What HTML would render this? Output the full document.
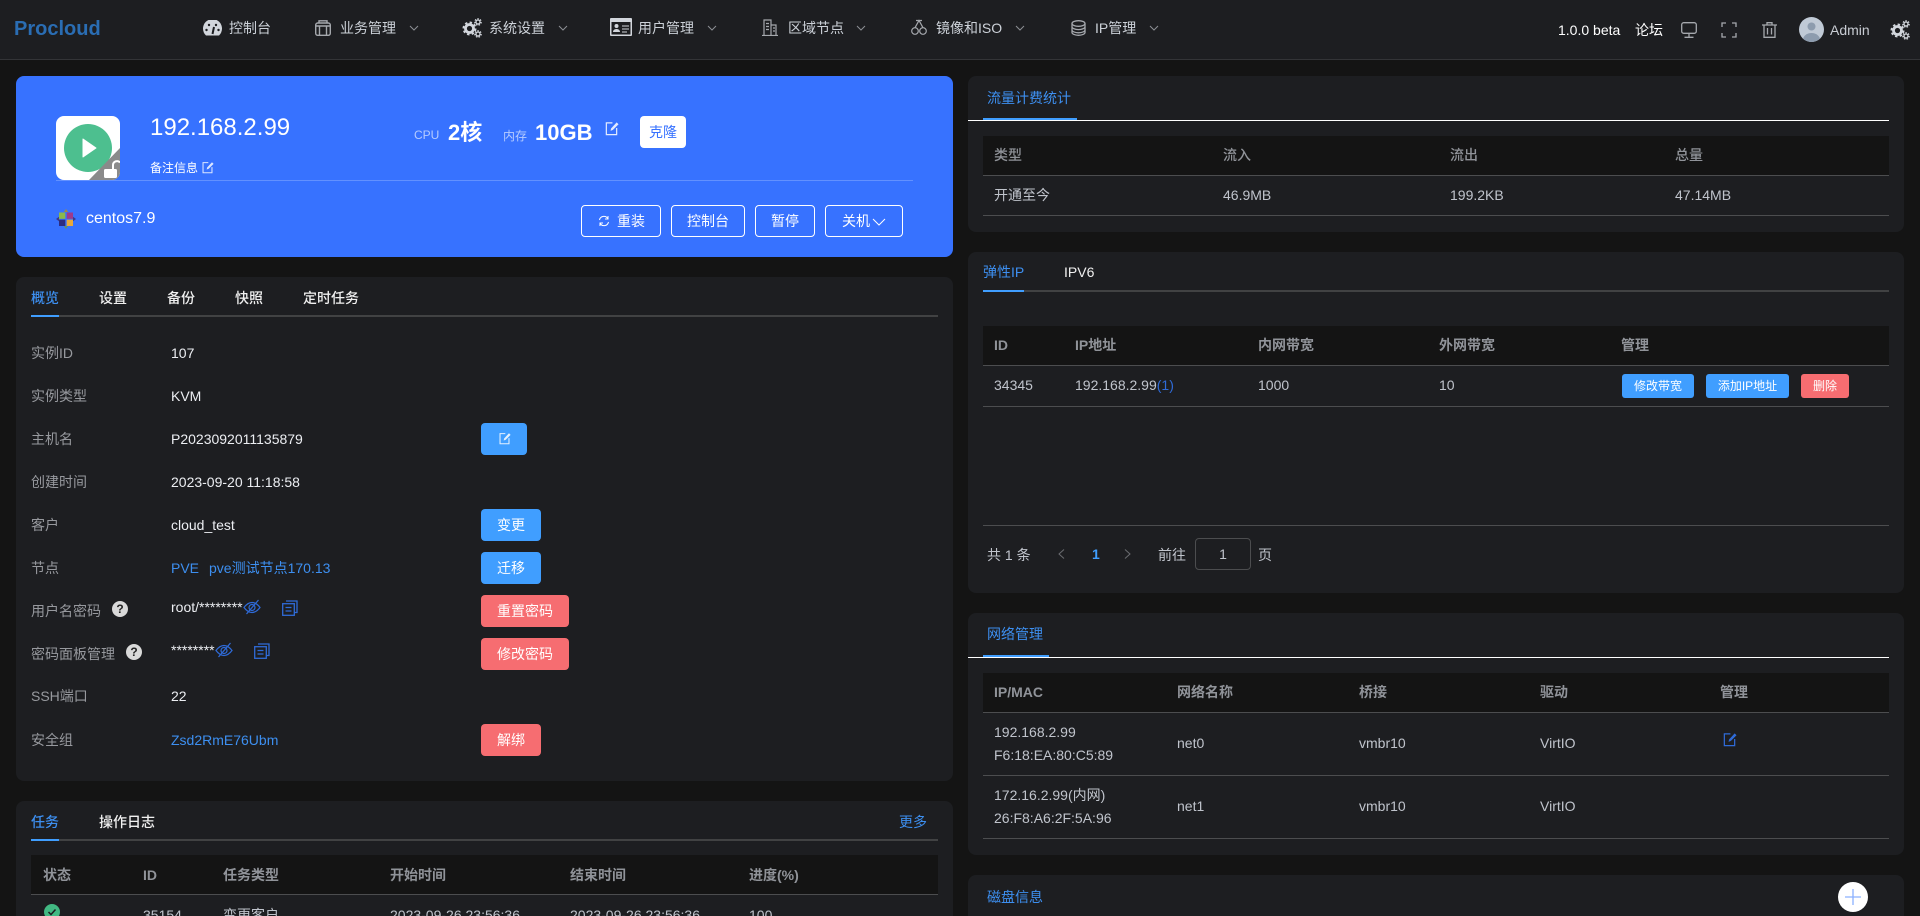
<!DOCTYPE html>
<html lang="zh"><head><meta charset="utf-8"><title>Procloud</title>
<style>
*{box-sizing:border-box}
html,body{margin:0;padding:0;width:1920px;height:916px;overflow:hidden;background:#141414}
body{font:14px/20px "Liberation Sans","Noto Sans CJK SC",sans-serif;color:#c0c4cc}
#r{position:relative;width:1920px;height:916px;overflow:hidden;background:#141414}
.a,.t,.card,.b,svg.i{position:absolute}
.t{white-space:nowrap;line-height:20px}
.card{background:#1d1e21;border-radius:8px}
.b{border-radius:4px;color:#fff;text-align:center;white-space:nowrap}
.blue{background:#409eff}.red{background:#f66d71}
.lb{color:#97999e}.v{color:#eceef2}.lk{color:#3d8ff0}
.n{color:#ccd1d8}
.act{color:#3d8ff0}.tab{color:#f0f0f0;font-weight:500}
.th{color:#909399;font-weight:700}
.head{position:absolute;background:#141414;height:39px}
.ln{position:absolute;height:1px;background:#4c4d4f}
.ul{position:absolute;height:2px;background:#409eff}
.ol{position:absolute;height:2px;background:#414243}
.wl{position:absolute;height:1px;background:#fff}
.hb{border:1px solid #fff;background:transparent;line-height:30px;height:32px;top:205px}
</style></head><body><div id="r">
<svg width="0" height="0" style="position:absolute">
<symbol id="edit" viewBox="0 0 16 16"><path d="M9 2H2.500v12.500h11V7.500" fill="none" stroke="currentColor" stroke-width="1.300"/><path d="M7 10.500l.5-2.500L13.500 1.500l2 2-6 6z" fill="currentColor"/></symbol>
<symbol id="chev" viewBox="0 0 10 6"><path d="M1 1l4 4 4-4" fill="none" stroke="#8c8f94" stroke-width="1"/></symbol>
<symbol id="gear" viewBox="0 0 20 20"><g fill="none" stroke="#d2d6dc"><circle cx="7.500" cy="10.500" r="4" stroke-width="2.800"/><circle cx="7.500" cy="10.500" r="6" stroke-width="2" stroke-dasharray="2.400 2.300"/><circle cx="16" cy="4" r="2" stroke-width="1.300"/><circle cx="16" cy="4" r="3.200" stroke-width="1.200" stroke-dasharray="1.500 1.300"/><circle cx="16" cy="16" r="2" stroke-width="1.300"/><circle cx="16" cy="16" r="3.200" stroke-width="1.200" stroke-dasharray="1.500 1.300"/></g></symbol>
<symbol id="eye" viewBox="0 0 18 16"><g fill="none" stroke="#2f6bd8" stroke-width="1.200"><path d="M1 8.500C4 4.500 6.500 3.500 9 3.500s5 1 8 5c-3 4-5.500 5-8 5s-5-1-8-5z"/><circle cx="9" cy="8.500" r="3"/><path d="M3.500 15L15.500 1"/></g></symbol>
<symbol id="copy" viewBox="0 0 16 16"><g fill="none" stroke="#2f6bd8" stroke-width="1.300"><rect x=".7" y="3.700" width="11.600" height="11.600"/><path d="M4 1h11v11.500h-2.500M3.500 7.500h6M3.500 11h6"/></g></symbol>
</svg>

<!-- header -->
<div class="a" style="left:0;top:0;width:1920px;height:60px;background:#1d1e21;border-bottom:1px solid #333437"></div>
<div class="t" style="left:14px;top:18px;font-size:20px;line-height:22px;font-weight:700;color:#2a6db3">Procloud</div>

<svg class="i" style="left:203px;top:20px" width="19" height="16" viewBox="0 0 19 16"><path d="M3 15.500A9.500 9.500 0 1 1 16 15.500z" fill="#d2d6dc"/><path d="M9.500 14l1.500-7" stroke="#1d1e21" stroke-width="2"/><circle cx="3.500" cy="10" r="1.200" fill="#1d1e21"/><circle cx="15.500" cy="10" r="1.200" fill="#1d1e21"/><circle cx="6" cy="5" r="1.200" fill="#1d1e21"/><circle cx="13" cy="5" r="1.200" fill="#1d1e21"/></svg>
<div class="t n" style="left:229px;top:18px">控制台</div>
<svg class="i" style="left:315px;top:20px" width="16" height="16" viewBox="0 0 16 16"><g fill="none" stroke="#a5a8ad" stroke-width="1.400"><rect x=".7" y="3" width="14.600" height="12.300" rx="2"/><path d="M1 6h14M4.500 6v9.300M11.500 6v9.300M4 3V.8h8V3"/></g></svg>
<div class="t n" style="left:340px;top:18px">业务管理</div>
<svg class="i" style="left:409px;top:25px" width="10" height="6"><use href="#chev"/></svg>
<svg class="i" style="left:462px;top:18px" width="20" height="20"><use href="#gear"/></svg>
<div class="t n" style="left:489px;top:18px">系统设置</div>
<svg class="i" style="left:558px;top:25px" width="10" height="6"><use href="#chev"/></svg>
<svg class="i" style="left:610px;top:18px" width="22" height="18" viewBox="0 0 22 18"><rect x="0" y="0" width="22" height="18" rx="1" fill="#d2d6dc"/><rect x="1.500" y="4" width="19" height="12.500" fill="#1d1e21"/><circle cx="6.500" cy="8" r="2" fill="#d2d6dc"/><path d="M3 14c0-4 7-4 7 0z" fill="#d2d6dc"/><path d="M12 8h7M12 11h7M12 14h5" stroke="#d2d6dc"/></svg>
<div class="t n" style="left:638px;top:18px">用户管理</div>
<svg class="i" style="left:707px;top:25px" width="10" height="6"><use href="#chev"/></svg>
<svg class="i" style="left:762px;top:19px" width="16" height="17" viewBox="0 0 16 17"><g fill="none" stroke="#a5a8ad" stroke-width="1.200"><path d="M0 16.500h16M2 16V1h7v15M9 6h5v10M4 4.500h3M4 7.500h3M4 10.500h3M11 9h2M11 12h2"/></g></svg>
<div class="t n" style="left:788px;top:18px">区域节点</div>
<svg class="i" style="left:856px;top:25px" width="10" height="6"><use href="#chev"/></svg>
<svg class="i" style="left:911px;top:19px" width="16" height="16" viewBox="0 0 16 16"><g fill="none" stroke="#a5a8ad" stroke-width="1.200"><circle cx="4" cy="12" r="3.300"/><circle cx="12" cy="12" r="3.300"/><path d="M4 8.700L8 1.500l4 7.200M5 1.500h6"/></g></svg>
<div class="t n" style="left:936px;top:18px">镜像和ISO</div>
<svg class="i" style="left:1015px;top:25px" width="10" height="6"><use href="#chev"/></svg>
<svg class="i" style="left:1071px;top:20px" width="15" height="16" viewBox="0 0 15 16"><g fill="none" stroke="#a5a8ad" stroke-width="1.300"><ellipse cx="7.500" cy="3.500" rx="6.500" ry="2.800"/><path d="M1 3.500v9c0 1.500 3 2.800 6.500 2.800S14 14 14 12.500v-9M1 6.800c0 1.500 3 2.800 6.500 2.800S14 8.300 14 6.800M1 10c0 1.500 3 2.800 6.500 2.800S14 11.500 14 10"/></g></svg>
<div class="t n" style="left:1095px;top:18px">IP管理</div>
<svg class="i" style="left:1149px;top:25px" width="10" height="6"><use href="#chev"/></svg>

<div class="t" style="left:1558px;top:20px;color:#fff">1.0.0 beta</div>
<div class="t" style="left:1635px;top:20px;color:#fff">论坛</div>
<svg class="i" style="left:1681px;top:22px" width="16" height="16" viewBox="0 0 16 16"><g fill="none" stroke="#a5a8ad" stroke-width="1.300"><rect x=".7" y=".7" width="14.600" height="10.600" rx="2"/><path d="M8 11.500V15M3.500 15.300h9"/></g></svg>
<svg class="i" style="left:1721px;top:22px" width="16" height="16" viewBox="0 0 16 16"><path d="M1 5V1h4M11 1h4v4M15 11v4h-4M5 15H1v-4" fill="none" stroke="#a5a8ad" stroke-width="1.300"/></svg>
<svg class="i" style="left:1762px;top:22px" width="15" height="16" viewBox="0 0 15 16"><path d="M0 3h15M5 3V.7h5V3M2 3v12.300h11V3M5.500 6v6.500M9.500 6v6.500" fill="none" stroke="#a5a8ad" stroke-width="1.300"/></svg>
<svg class="i" style="left:1799px;top:17px" width="25" height="25" viewBox="0 0 25 25"><defs><clipPath id="cp"><circle cx="12.500" cy="12.500" r="12.500"/></clipPath></defs><circle cx="12.500" cy="12.500" r="12.500" fill="#c0cad6"/><circle cx="12.500" cy="9.500" r="4" fill="#8d9cae"/><ellipse cx="12.500" cy="23" rx="8.500" ry="7" fill="#8d9cae" clip-path="url(#cp)"/></svg>
<div class="t" style="left:1830px;top:20px;color:#c8ccd3">Admin</div>
<svg class="i" style="left:1890px;top:20px" width="20" height="20"><use href="#gear"/></svg>

<!-- hero -->
<div class="a" style="left:16px;top:76px;width:937px;height:181px;background:#3772ff;border-radius:8px"></div>
<svg class="i" style="left:56px;top:116px" width="64" height="64" viewBox="0 0 64 64"><defs><clipPath id="bx"><rect width="64" height="64" rx="8"/></clipPath></defs><rect width="64" height="64" rx="8" fill="#fff"/><circle cx="32" cy="32" r="24" fill="#4dbf8f"/><path d="M27 23l13 9-13 9z" fill="#fff" stroke="#fff" stroke-linejoin="round" stroke-width="1"/><path d="M64 32V64H33z" fill="#8a8a8a" clip-path="url(#bx)"/><rect x="48" y="53" width="13" height="9" rx="1.500" fill="#fff"/><path d="M57 53v-4a4 4 0 0 1 7-2.500" fill="none" stroke="#fff" stroke-width="2"/></svg>
<div class="t" style="left:150px;top:116px;font-size:24px;line-height:24px;color:#fff">192.168.2.99</div>
<div class="t" style="left:150px;top:158px;font-size:12px;color:#fff">备注信息</div>
<svg class="i" style="left:201px;top:161px;color:#dbe6ff" width="13" height="13"><use href="#edit"/></svg>
<div class="t" style="left:414px;top:125px;font-size:12px;color:#b6ccff">CPU</div>
<div class="t" style="left:448px;top:121px;font-size:22px;line-height:24px;font-weight:700;color:#fff">2核</div>
<div class="t" style="left:503px;top:126px;font-size:12px;color:#b6ccff">内存</div>
<div class="t" style="left:535px;top:120px;font-size:22px;line-height:25px;font-weight:700;color:#fff">10GB</div>
<svg class="i" style="left:604px;top:121px;color:#e3ebff" width="15" height="15"><use href="#edit"/></svg>
<div class="b" style="left:640px;top:116px;width:46px;height:32px;line-height:32px;background:#fff;color:#3772ff">克隆</div>
<div class="a" style="left:56px;top:180px;width:857px;height:1px;background:rgba(255,255,255,.22)"></div>
<svg class="i" style="left:56px;top:209px" width="20" height="20" viewBox="0 0 20 20"><rect x="3" y="3.500" width="6.300" height="6.300" fill="#8cb84a"/><rect x="10.700" y="3.500" width="6.300" height="6.300" fill="#9c3a8c"/><rect x="3" y="10.700" width="6.300" height="6.300" fill="#2d2c80"/><rect x="10.700" y="10.700" width="6.300" height="6.300" fill="#e8a93a"/><path d="M10 0l2.200 3H7.800z" fill="#9c8a4a"/><path d="M10 20l2.200-3H7.800z" fill="#5f8f6a"/><path d="M0 10l3 2.200V7.800z" fill="#3a3a8a"/><path d="M20 10l-3 2.200V7.800z" fill="#3a3a8a"/></svg>
<div class="t" style="left:86px;top:208px;font-size:16px;line-height:22px;color:#fff">centos7.9</div>
<div class="b hb" style="left:581px;width:80px">
  <svg style="position:absolute;left:16px;top:9px" width="12" height="12" viewBox="0 0 12 12"><path d="M1.500 5A4.500 4.500 0 0 1 10 4M10.500 7A4.500 4.500 0 0 1 2 8M10 1v3H7M2 11V8h3" fill="none" stroke="#fff" stroke-width="1"/></svg>
  <span style="margin-left:20px">重装</span></div>
<div class="b hb" style="left:671px;width:74px">控制台</div>
<div class="b hb" style="left:755px;width:60px">暂停</div>
<div class="b hb" style="left:825px;width:78px">关机<svg style="margin-left:2px" width="14" height="8" viewBox="0 0 14 8"><path d="M1 1l6 6 6-6" fill="none" stroke="#fff" stroke-width="1"/></svg></div>

<!-- overview card -->
<div class="card" style="left:16px;top:277px;width:937px;height:504px"></div>
<div class="t act" style="left:31px;top:288px;font-weight:500">概览</div>
<div class="t tab" style="left:99px;top:288px">设置</div>
<div class="t tab" style="left:167px;top:288px">备份</div>
<div class="t tab" style="left:235px;top:288px">快照</div>
<div class="t tab" style="left:303px;top:288px">定时任务</div>
<div class="ol" style="left:31px;top:315px;width:907px"></div><div class="ul" style="left:31px;top:315px;width:28px"></div>

<div class="t lb" style="left:31px;top:343px">实例ID</div><div class="t v" style="left:171px;top:343px">107</div>
<div class="t lb" style="left:31px;top:386px">实例类型</div><div class="t v" style="left:171px;top:386px">KVM</div>
<div class="t lb" style="left:31px;top:429px">主机名</div><div class="t v" style="left:171px;top:429px">P2023092011135879</div>
<div class="b blue" style="left:481px;top:423px;width:46px;height:32px"></div>
<svg class="i" style="left:498px;top:432px;color:#e4f1ff" width="13" height="13"><use href="#edit"/></svg>
<div class="t lb" style="left:31px;top:472px">创建时间</div><div class="t v" style="left:171px;top:472px">2023-09-20 11:18:58</div>
<div class="t lb" style="left:31px;top:515px">客户</div><div class="t v" style="left:171px;top:515px">cloud_test</div>
<div class="b blue" style="left:481px;top:509px;width:60px;height:32px;line-height:32px">变更</div>
<div class="t lb" style="left:31px;top:558px">节点</div><div class="t lk" style="left:171px;top:558px">PVE<span style="margin-left:10px">pve测试节点170.13</span></div>
<div class="b blue" style="left:481px;top:552px;width:60px;height:32px;line-height:32px">迁移</div>
<div class="t lb" style="left:31px;top:601px">用户名密码</div>
<div class="a" style="left:112px;top:601px;width:16px;height:16px;border-radius:50%;background:#d9d9d9;color:#222;font:bold 12px/16px 'Liberation Sans',sans-serif;text-align:center">?</div>
<div class="t v" style="left:171px;top:597px">root/********</div>
<svg class="i" style="left:243px;top:599px" width="18" height="16"><use href="#eye"/></svg>
<svg class="i" style="left:282px;top:600px" width="16" height="16"><use href="#copy"/></svg>
<div class="b red" style="left:481px;top:595px;width:88px;height:32px;line-height:32px">重置密码</div>
<div class="t lb" style="left:31px;top:644px">密码面板管理</div>
<div class="a" style="left:126px;top:644px;width:16px;height:16px;border-radius:50%;background:#d9d9d9;color:#222;font:bold 12px/16px 'Liberation Sans',sans-serif;text-align:center">?</div>
<div class="t v" style="left:171px;top:640px">********</div>
<svg class="i" style="left:215px;top:642px" width="18" height="16"><use href="#eye"/></svg>
<svg class="i" style="left:254px;top:643px" width="16" height="16"><use href="#copy"/></svg>
<div class="b red" style="left:481px;top:638px;width:88px;height:32px;line-height:32px">修改密码</div>
<div class="t lb" style="left:31px;top:686px">SSH端口</div><div class="t v" style="left:171px;top:686px">22</div>
<div class="t lb" style="left:31px;top:730px">安全组</div><div class="t lk" style="left:171px;top:730px">Zsd2RmE76Ubm</div>
<div class="b red" style="left:481px;top:724px;width:60px;height:32px;line-height:32px">解绑</div>

<!-- task card -->
<div class="card" style="left:16px;top:801px;width:937px;height:130px"></div>
<div class="t act" style="left:31px;top:812px;font-weight:500">任务</div>
<div class="t tab" style="left:99px;top:812px">操作日志</div>
<div class="t act" style="left:899px;top:812px">更多</div>
<div class="ol" style="left:31px;top:839px;width:907px"></div><div class="ul" style="left:31px;top:839px;width:28px"></div>
<div class="head" style="left:31px;top:855px;width:907px"></div>
<div class="ln" style="left:31px;top:894px;width:907px"></div>
<div class="t th" style="left:43px;top:865px">状态</div>
<div class="t th" style="left:143px;top:865px">ID</div>
<div class="t th" style="left:223px;top:865px">任务类型</div>
<div class="t th" style="left:390px;top:865px">开始时间</div>
<div class="t th" style="left:570px;top:865px">结束时间</div>
<div class="t th" style="left:749px;top:865px">进度(%)</div>
<svg class="i" style="left:44px;top:904px" width="16" height="16" viewBox="0 0 16 16"><circle cx="8" cy="8" r="8" fill="#42b983"/><path d="M4.500 8l2.500 2.500 4.500-5" fill="none" stroke="#1d1e21" stroke-width="1.500"/></svg>
<div class="t" style="left:143px;top:905px">35154</div>
<div class="t" style="left:223px;top:905px">变更客户</div>
<div class="t" style="left:390px;top:905px">2023-09-26 23:56:36</div>
<div class="t" style="left:570px;top:905px">2023-09-26 23:56:36</div>
<div class="t" style="left:749px;top:905px">100</div>

<!-- traffic -->
<div class="card" style="left:968px;top:76px;width:936px;height:156px"></div>
<div class="t act" style="left:987px;top:88px">流量计费统计</div>
<div class="wl" style="left:968px;top:120px;width:921px"></div><div class="ul" style="left:983px;top:118px;width:94px"></div>
<div class="head" style="left:983px;top:136px;width:906px"></div>
<div class="ln" style="left:983px;top:175px;width:906px"></div>
<div class="ln" style="left:983px;top:215px;width:906px"></div>
<div class="t th" style="left:994px;top:145px;font-weight:500">类型</div>
<div class="t th" style="left:1223px;top:145px;font-weight:500">流入</div>
<div class="t th" style="left:1450px;top:145px;font-weight:500">流出</div>
<div class="t th" style="left:1675px;top:145px;font-weight:500">总量</div>
<div class="t" style="left:994px;top:185px">开通至今</div>
<div class="t" style="left:1223px;top:185px">46.9MB</div>
<div class="t" style="left:1450px;top:185px">199.2KB</div>
<div class="t" style="left:1675px;top:185px">47.14MB</div>

<!-- elastic ip -->
<div class="card" style="left:968px;top:252px;width:936px;height:341px"></div>
<div class="t act" style="left:983px;top:262px">弹性IP</div>
<div class="t" style="left:1064px;top:262px;color:#f0f0f0">IPV6</div>
<div class="ol" style="left:983px;top:290px;width:906px"></div><div class="ul" style="left:983px;top:290px;width:41px"></div>
<div class="head" style="left:983px;top:326px;width:906px"></div>
<div class="ln" style="left:983px;top:365px;width:906px"></div>
<div class="ln" style="left:983px;top:406px;width:906px"></div>
<div class="ln" style="left:983px;top:525px;width:906px"></div>
<div class="t th" style="left:994px;top:335px">ID</div>
<div class="t th" style="left:1075px;top:335px">IP地址</div>
<div class="t th" style="left:1258px;top:335px">内网带宽</div>
<div class="t th" style="left:1439px;top:335px">外网带宽</div>
<div class="t th" style="left:1621px;top:335px">管理</div>
<div class="t" style="left:994px;top:375px">34345</div>
<div class="t" style="left:1075px;top:375px">192.168.2.99<span style="color:#2f6bd8">(1)</span></div>
<div class="t" style="left:1258px;top:375px">1000</div>
<div class="t" style="left:1439px;top:375px">10</div>
<div class="b blue" style="left:1622px;top:374px;width:72px;height:24px;line-height:24px;font-size:12px;border-radius:3px">修改带宽</div>
<div class="b blue" style="left:1706px;top:374px;width:83px;height:24px;line-height:24px;font-size:12px;border-radius:3px">添加IP地址</div>
<div class="b red" style="left:1801px;top:374px;width:48px;height:24px;line-height:24px;font-size:12px;border-radius:3px">删除</div>
<div class="t" style="left:987px;top:545px">共 1 条</div>
<svg class="i" style="left:1058px;top:549px" width="7" height="10" viewBox="0 0 7 10"><path d="M6 .5L1 5l5 4.500" fill="none" stroke="#6b6d71"/></svg>
<div class="t" style="left:1092px;top:544px;color:#409eff;font-weight:700">1</div>
<svg class="i" style="left:1124px;top:549px" width="7" height="10" viewBox="0 0 7 10"><path d="M1 .5L6 5 1 9.500" fill="none" stroke="#6b6d71"/></svg>
<div class="t" style="left:1158px;top:545px">前往</div>
<div class="a" style="left:1195px;top:538px;width:56px;height:32px;border:1px solid #4c4d4f;border-radius:4px;text-align:center;line-height:30px">1</div>
<div class="t" style="left:1258px;top:545px">页</div>

<!-- network -->
<div class="card" style="left:968px;top:613px;width:936px;height:242px"></div>
<div class="t act" style="left:987px;top:624px">网络管理</div>
<div class="wl" style="left:968px;top:657px;width:921px"></div><div class="ul" style="left:983px;top:655px;width:66px"></div>
<div class="head" style="left:983px;top:673px;width:906px"></div>
<div class="ln" style="left:983px;top:712px;width:906px"></div>
<div class="ln" style="left:983px;top:775px;width:906px"></div>
<div class="ln" style="left:983px;top:838px;width:906px"></div>
<div class="t th" style="left:994px;top:682px">IP/MAC</div>
<div class="t th" style="left:1177px;top:682px">网络名称</div>
<div class="t th" style="left:1359px;top:682px">桥接</div>
<div class="t th" style="left:1540px;top:682px">驱动</div>
<div class="t th" style="left:1720px;top:682px">管理</div>
<div class="t" style="left:994px;top:722px">192.168.2.99</div>
<div class="t" style="left:994px;top:745px">F6:18:EA:80:C5:89</div>
<div class="t" style="left:1177px;top:733px">net0</div>
<div class="t" style="left:1359px;top:733px">vmbr10</div>
<div class="t" style="left:1540px;top:733px">VirtIO</div>
<svg class="i" style="left:1722px;top:732px;color:#2f6bd8" width="15" height="15"><use href="#edit"/></svg>
<div class="t" style="left:994px;top:785px">172.16.2.99(内网)</div>
<div class="t" style="left:994px;top:808px">26:F8:A6:2F:5A:96</div>
<div class="t" style="left:1177px;top:796px">net1</div>
<div class="t" style="left:1359px;top:796px">vmbr10</div>
<div class="t" style="left:1540px;top:796px">VirtIO</div>

<!-- disk -->
<div class="card" style="left:968px;top:875px;width:936px;height:60px"></div>
<div class="t act" style="left:987px;top:887px">磁盘信息</div>
<div class="a" style="left:1838px;top:882px;width:30px;height:30px;border-radius:50%;background:#fff"></div>
<svg class="i" style="left:1845px;top:889px" width="16" height="16" viewBox="0 0 16 16"><path d="M8 0v16M0 8h16" stroke="#8ab0ff" stroke-width="1.300"/></svg>
</div></body></html>
